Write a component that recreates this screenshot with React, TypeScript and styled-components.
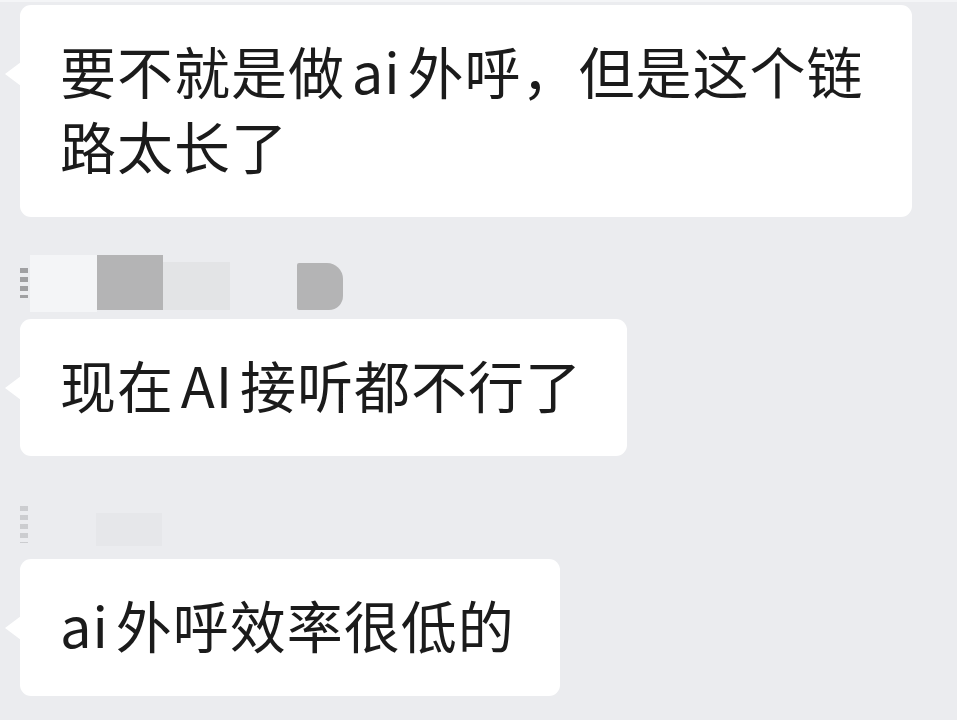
import React from "react";
import styled, { createGlobalStyle } from "styled-components";

const Global = createGlobalStyle`
  html, body {
    margin: 0;
    padding: 0;
    background: #ebecef;
  }
  body {
    font-family: "Noto Sans CJK SC", "Noto Sans", sans-serif;
  }
`;

const Page = styled.div`
  width: 957px;
  height: 720px;
  box-sizing: border-box;
  overflow: hidden;
  background: #ebecef;
  border-top: 2px solid #f4f5f7;
  padding: 3px 0 0 20px;
  display: flex;
  flex-direction: column;
  align-items: flex-start;
`;

const Bubble = styled.div`
  position: relative;
  box-sizing: border-box;
  width: fit-content;
  max-width: 892px;
  background: #ffffff;
  border-radius: 11px;
  padding: 27px 45px 35px 40px;
  font-size: 56px;
  line-height: 75px;
  letter-spacing: 1px;
  color: #1b1b1b;
  font-weight: 400;

  &::before {
    content: "";
    position: absolute;
    left: -15px;
    top: 57px;
    width: 0;
    height: 0;
    border-top: 12px solid transparent;
    border-bottom: 12px solid transparent;
    border-right: 16px solid #ffffff;
  }
`;

const Latin = styled.span<{ $lead?: boolean }>`
  margin: 0 0.12em 0 ${(p) => (p.$lead ? "0" : "0.12em")};
`;

const NameRow = styled.div<{ $top: number }>`
  display: flex;
  align-items: flex-start;
  height: 64px;
  margin-top: ${(p) => p.$top}px;
`;

const Mark = styled.div<{ $y: number; $h: number; $shade: string }>`
  width: 8px;
  height: ${(p) => p.$h}px;
  margin-top: ${(p) => p.$y}px;
  margin-right: 2px;
  background: repeating-linear-gradient(
    to bottom,
    ${(p) => p.$shade} 0px,
    ${(p) => p.$shade} 5px,
    transparent 5px,
    transparent 9px
  );
  opacity: 0.8;
`;

const Redact = styled.div<{
  $w: number;
  $h: number;
  $y: number;
  $color: string;
  $gap?: number;
  $round?: boolean;
}>`
  width: ${(p) => p.$w}px;
  height: ${(p) => p.$h}px;
  margin-top: ${(p) => p.$y}px;
  margin-left: ${(p) => p.$gap ?? 0}px;
  background: ${(p) => p.$color};
  border-radius: ${(p) => (p.$round ? "2px 16px 14px 2px" : "0")};
`;

export default function App() {
  return (
    <>
      <Global />
      <Page>
        <Bubble>
          要不就是做<Latin>ai</Latin>外呼，但是这个链路太长了
        </Bubble>

        <NameRow $top={38}>
          <Mark $y={13} $h={30} $shade="#8d8d8f" />
          <Redact $w={67} $h={57} $y={0} $color="#f4f5f7" />
          <Redact $w={66} $h={55} $y={0} $color="#b4b4b5" />
          <Redact $w={67} $h={48} $y={7} $color="#e3e4e6" />
          <Redact $w={46} $h={47} $y={8} $color="#b4b4b5" $gap={67} $round />
        </NameRow>

        <Bubble>
          现在<Latin>AI</Latin>接听都不行了
        </Bubble>

        <NameRow $top={39}>
          <Mark $y={11} $h={37} $shade="#c4c5c8" />
          <Redact $w={66} $h={33} $y={18} $color="#e6e7ea" $gap={66} />
        </NameRow>

        <Bubble>
          <Latin $lead>ai</Latin>外呼效率很低的
        </Bubble>
      </Page>
    </>
  );
}
